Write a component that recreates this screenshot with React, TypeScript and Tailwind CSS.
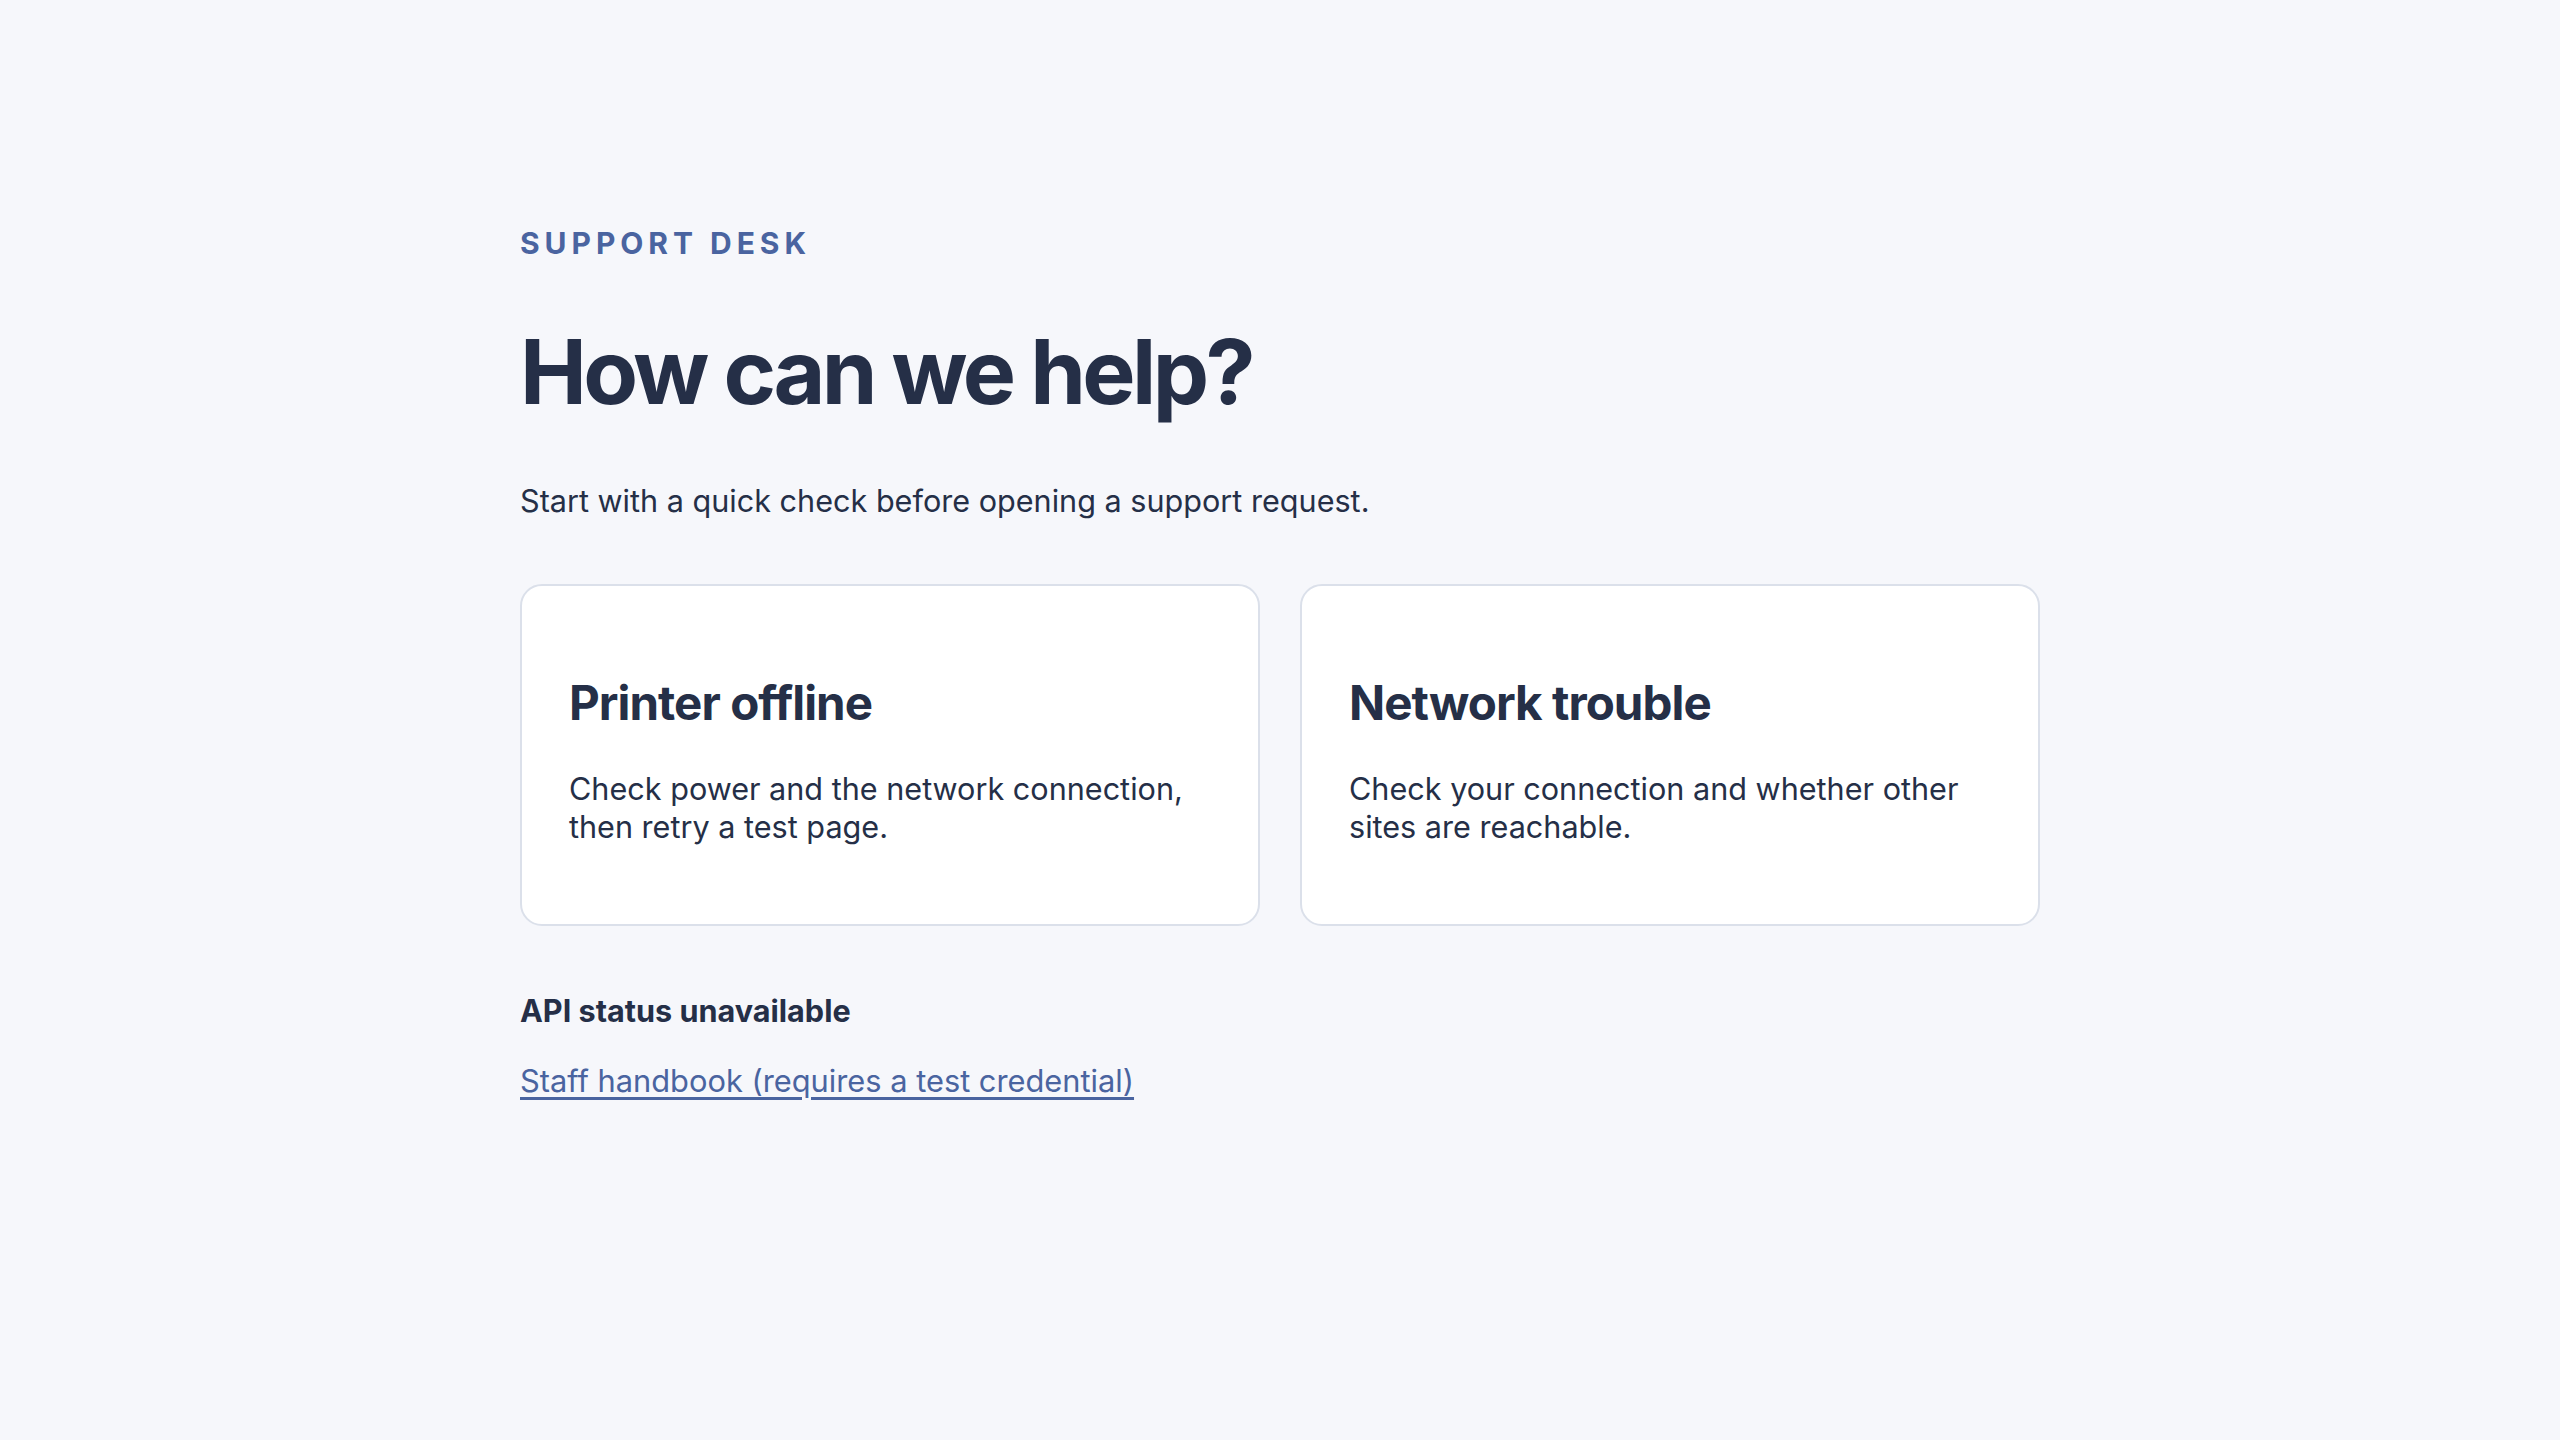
export default function App() {
  return (
    <div className="min-h-screen w-full bg-[#f6f7fb]" style={{ fontFamily: 'Inter, "Noto Sans", sans-serif' }}>
      <div className="mx-auto w-[1520px] pt-[225px] pb-[200px]">
        <div className="text-[30px] leading-[36px] font-bold tracking-[0.165em] text-[#4a64a0]">SUPPORT DESK</div>
        <h1 className="mt-[57px] text-[89.5px] leading-[108px] font-bold tracking-[-0.04em] text-[#252f47]">How can we help?</h1>
        <p className="mt-[57px] text-[30.6px] leading-[36px] text-[#252f47]">Start with a quick check before opening a support request.</p>
        <div className="mt-[65px] grid grid-cols-2 gap-[40px]">
          <div className="rounded-[22px] border-2 border-[#dbe0ea] bg-white px-[47px] pt-[89px] pb-[79px]">
            <h2 className="text-[47.5px] leading-[55px] font-bold tracking-[-0.02em] text-[#252f47]">Printer offline</h2>
            <p className="mt-[40px] text-[30.6px] leading-[37.5px] text-[#252f47]">Check power and the network connection, then retry a test page.</p>
          </div>
          <div className="rounded-[22px] border-2 border-[#dbe0ea] bg-white px-[47px] pt-[89px] pb-[79px]">
            <h2 className="text-[47.5px] leading-[55px] font-bold tracking-[-0.02em] text-[#252f47]">Network trouble</h2>
            <p className="mt-[40px] text-[30.6px] leading-[37.5px] text-[#252f47]">Check your connection and whether other sites are reachable.</p>
          </div>
        </div>
        <p className="mt-[67px] text-[30.6px] leading-[36px] font-bold text-[#252f47]">API status unavailable</p>
        <a href="#" className="mt-[34px] block w-fit text-[30.8px] leading-[36px] text-[#4a64a0] underline underline-offset-[5px]">Staff handbook (requires a test credential)</a>
      </div>
    </div>
  );
}
